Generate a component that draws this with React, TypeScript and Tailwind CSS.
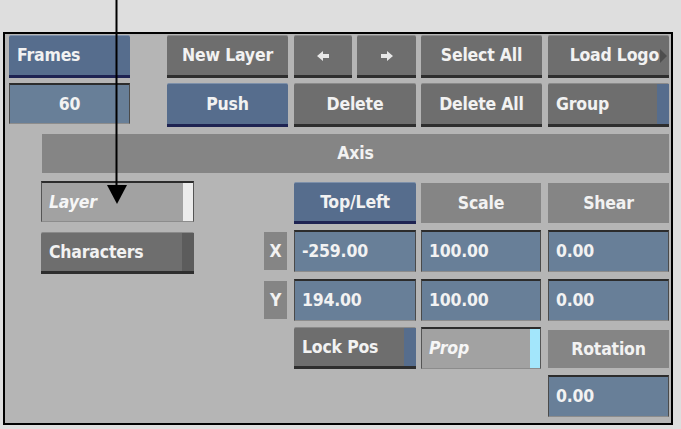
const font = { fontFamily: '"DejaVu Sans Condensed", "DejaVu Sans", sans-serif' };

const txt = "text-[17.5px] font-bold text-[#f2f2f2] tracking-[-0.2px]";

function GrayBtn({ label, className = "", align = "center", children }: { label?: string; className?: string; align?: string; children?: React.ReactNode }) {
  return (
    <div
      className={`flex h-full items-center rounded-t-[2px] border-t border-[#8a8a8a] border-b-[3px] border-b-[#2e2e2e] bg-[#6e6e6e] ${txt} ${
        align === "center" ? "justify-center" : "justify-start px-2"
      } ${className}`}
    >
      {label}
      {children}
    </div>
  );
}

function BlueBtn({ label, className = "", align = "center" }: { label: string; className?: string; align?: string }) {
  return (
    <div
      className={`flex h-full items-center rounded-t-[2px] border-t border-[#7d90aa] border-b-[3px] border-b-[#1e2352] bg-[#566d8d] ${txt} ${
        align === "center" ? "justify-center" : "justify-start px-2"
      } ${className}`}
    >
      {label}
    </div>
  );
}

function Field({ value, center = false }: { value: string; center?: boolean }) {
  return (
    <div
      className={`flex h-full items-center border-t-2 border-t-[#2c2c2c] border-x border-x-[#4a4a4a] border-b border-b-[#8c8c8c] bg-[#687f98] ${txt} ${
        center ? "justify-center" : "px-[7px]"
      }`}
    >
      {value}
    </div>
  );
}

function Label({ label, className = "" }: { label: string; className?: string }) {
  return <div className={`flex h-full items-center justify-center bg-[#858585] ${txt} ${className}`}>{label}</div>;
}

function LightToggle({ label, indicator }: { label: string; indicator: string }) {
  return (
    <div className="flex h-full border-t-2 border-t-[#2c2c2c] border-x border-x-[#555] border-b border-b-[#8c8c8c] bg-[#a2a2a2]">
      <div className={`flex flex-1 items-center px-[7px] italic ${txt} text-[#f6f6f6]`}>{label}</div>
      <div className={`w-[10px] ${indicator}`} />
    </div>
  );
}

function IndicatorBtn({ label, indicator }: { label: string; indicator: string }) {
  return (
    <div className="flex h-full rounded-t-[2px] border-t border-[#8a8a8a] border-b-[3px] border-b-[#2e2e2e] bg-[#6e6e6e]">
      <div className={`flex flex-1 items-center px-2 ${txt}`}>{label}</div>
      <div className={`w-[12px] ${indicator}`} />
    </div>
  );
}

// one row of the axis table: label column, then three value columns
function AxisRow({ label, cells, className = "" }: { label?: React.ReactNode; cells: React.ReactNode[]; className?: string }) {
  return (
    <div className={`flex h-[42px] ${className}`}>
      <div className="w-[23px]">{label}</div>
      <div className="ml-[7px] w-[122px]">{cells[0]}</div>
      <div className="ml-[5px] w-[120px]">{cells[1]}</div>
      <div className="ml-[7px] w-[121px]">{cells[2]}</div>
    </div>
  );
}

export default function App() {
  return (
    <div className="relative h-[429px] w-[681px] overflow-hidden bg-[#dedede] pt-[32px] pl-[3px]" style={font}>
      {/* Panel */}
      <div className="h-[393px] w-[670px] border-2 border-black bg-[#b5b5b5] pt-[1px] pl-[4px]">
        {/* Row 1 */}
        <div className="flex h-[43px]">
          <BlueBtn label="Frames" align="left" className="w-[121px]" />
          <div className="ml-[37px] w-[121px]">
            <GrayBtn label="New Layer" />
          </div>
          <div className="ml-[6px] w-[58px]">
            <GrayBtn>
              <svg width="12" height="10" viewBox="0 0 12 10">
                <path d="M0 5 L6 0 L6 3 L12 3 L12 7 L6 7 L6 10 Z" fill="#e8e8e8" />
              </svg>
            </GrayBtn>
          </div>
          <div className="ml-[5px] w-[59px]">
            <GrayBtn>
              <svg width="12" height="10" viewBox="0 0 12 10">
                <path d="M12 5 L6 0 L6 3 L0 3 L0 7 L6 7 L6 10 Z" fill="#e8e8e8" />
              </svg>
            </GrayBtn>
          </div>
          <div className="ml-[5px] w-[121px]">
            <GrayBtn label="Select All" />
          </div>
          <div className="ml-[6px] w-[121px]">
            <GrayBtn className="justify-end pr-[2px]">
              <span>Load Logo</span>
              <svg width="7" height="14" viewBox="0 0 7 14" className="ml-[1px]">
                <path d="M0 0 L7 7 L0 14 Z" fill="#4e4e4e" />
              </svg>
            </GrayBtn>
          </div>
        </div>

        {/* Row 2 */}
        <div className="mt-[5px] flex h-[44px]">
          <div className="h-[41px] w-[121px]">
            <Field value="60" center />
          </div>
          <div className="ml-[37px] w-[121px]">
            <BlueBtn label="Push" />
          </div>
          <div className="ml-[6px] w-[122px]">
            <GrayBtn label="Delete" />
          </div>
          <div className="ml-[5px] w-[121px]">
            <GrayBtn label="Delete All" />
          </div>
          <div className="ml-[6px] w-[121px]">
            <IndicatorBtn label="Group" indicator="bg-[#566d8d]" />
          </div>
        </div>

        {/* Axis */}
        <div className="ml-[33px] mt-[7px] h-[39px] w-[627px]">
          <Label label="Axis" />
        </div>

        {/* Body */}
        <div className="mt-[8px] flex">
          <div className="ml-[32px] flex w-[153px] flex-col gap-[10px]">
            <div className="h-[41px]">
              <LightToggle label="Layer" indicator="bg-[#ececec]" />
            </div>
            <div className="h-[42px]">
              <IndicatorBtn label="Characters" indicator="bg-[#5c5c5c]" />
            </div>
          </div>

          <div className="ml-[70px] mt-[1px] flex flex-col">
            <AxisRow
              cells={[
                <BlueBtn label="Top/Left" />,
                <div className="h-full py-[1px]">
                  <Label label="Scale" />
                </div>,
                <div className="h-full py-[1px]">
                  <Label label="Shear" />
                </div>,
              ]}
            />
            <AxisRow
              className="mt-[6px]"
              label={
                <div className="h-full py-[2px]">
                  <Label label="X" />
                </div>
              }
              cells={[<Field value="-259.00" />, <Field value="100.00" />, <Field value="0.00" />]}
            />
            <AxisRow
              className="mt-[7px]"
              label={
                <div className="h-full py-[2px]">
                  <Label label="Y" />
                </div>
              }
              cells={[<Field value="194.00" />, <Field value="100.00" />, <Field value="0.00" />]}
            />
            <AxisRow
              className="mt-[6px]"
              cells={[
                <IndicatorBtn label="Lock Pos" indicator="bg-[#566d8d]" />,
                <LightToggle label="Prop" indicator="bg-[#a3e6fb]" />,
                <div className="h-full pt-[3px] pb-[1px]">
                  <Label label="Rotation" />
                </div>,
              ]}
            />
            <AxisRow className="mt-[6px]" cells={[null, null, <Field value="0.00" />]} />
          </div>
        </div>
      </div>

      {/* Pointer arrow */}
      <svg className="absolute left-[106px] top-0" width="22" height="206" viewBox="0 0 22 206">
        <line x1="10.5" y1="0" x2="10.5" y2="188" stroke="#000" strokeWidth="2" />
        <path d="M1 185 L21 185 L11 204 Z" fill="#000" />
      </svg>
    </div>
  );
}
